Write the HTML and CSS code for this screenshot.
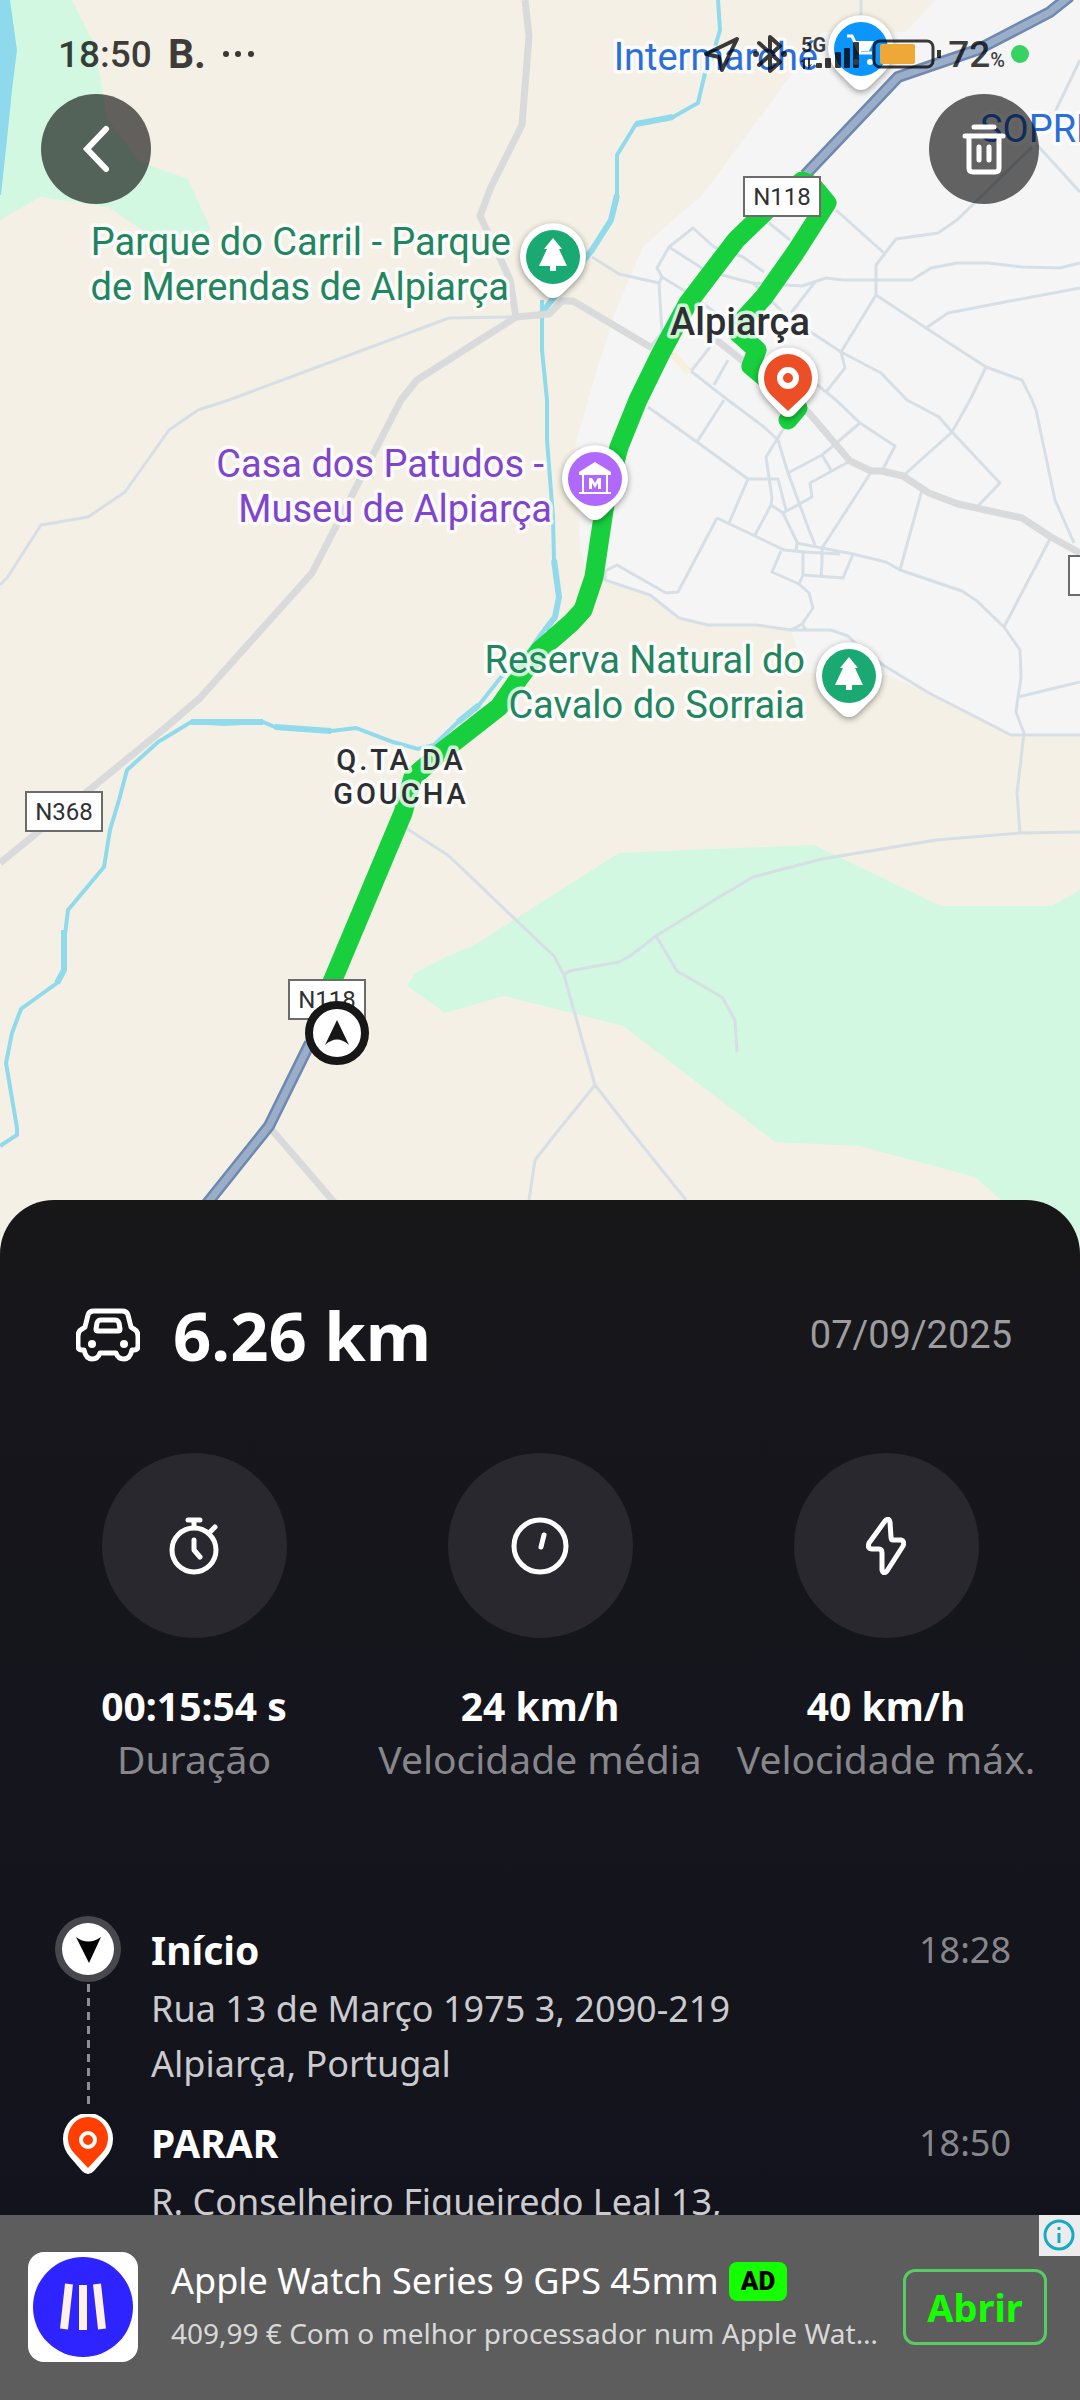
FILE: index.html
```html
<!DOCTYPE html>
<html lang="pt">
<head>
<meta charset="utf-8">
<meta name="viewport" content="width=device-width, initial-scale=1">
<title>Detalhes da viagem</title>
<link rel="stylesheet" href="styles.css">
</head>
<body>
<div class="app">
  <section class="map-area">
    <svg class="map" viewBox="0 0 1080 1260" role="img" aria-label="Mapa do percurso em Alpiarça">
      <defs>
        <path id="pin" d="M0 41c-4 0-7-2-10-5L-24 22A33 33 0 1 1 24 22L10 36C7 39 4 41 0 41Z"/>
        <path id="tree" d="M0-19 9-8H6L14 9H3v5h-6V9h-11L-6-8h-3Z"/>
      </defs>
      <rect class="land" width="1080" height="1260"/>
      <path class="park" d="M0 0H72L92 40 100 75 107 118 140 162 188 179 210 228 206 235H150L108 207 40 197 0 220Z"/>
      <path class="park" d="M407 986 415 973 448 956 473 946 540 903 619 853 814 845 941 906H1052L1080 890V1260H1070L1001 1200 975 1177 859 1146 775 1142 623 1026 540 1005 504 996 445 1013Z"/>
      <path class="urban" d="M936 0 905 32H822L791 75 764 112 700 198 681 213 643 247 616 310 600 360 588 400 574 450 581 553 585 567 604 582 650 595 679 618 708 625H757L791 631 797 648 807 673 888 675 929 693 1011 735H1080V0Z"/>
      <path class="lake" d="M0 0H10L17 50 12 90 8 130 1 195H0Z"/>
      <g class="river">
        <path d="M718 0 720 30 712 57 705 73 698 103 673 117 636 124 617 155V200L611 220 592 250M542 300V350L547 400V440L553 517 554 560 559 597 555 617 540 635 530 650 501 677 479 705 458 722 434 745 418 749 393 742 356 728 331 731 275 727 263 722 224 724 191 722 158 742 127 770 119 800 110 830 104 867 68 910 64 943V970L57 983 21 1009 12 1033 6 1063 17 1128V1135L0 1146"/>
        <path class="river-wide" d="M673 117 636 124M617 195 611 220 592 250 540 315M554 560 559 597 555 617 545 630M479 705 458 722M331 731 275 727M263 722 191 722M64 930V970L57 983"/>
      </g>
      <g class="street">
        <path d="M861 0V18M1080 60 1055 112M1028 135 1080 192M1032 147 957 220 938 233 896 239 876 265V295L841 352 845 368 826 392M836 210 884 253M769 223 790 240"/>
        <path d="M714 247 693 228 669 247 657 268 662 277 659 283 662 333 650 347M592 257 619 274 659 283M714 247 743 257 764 272"/>
        <path d="M669 247 705 270 733 278 753 283 802 286 826 278 843 280H912L931 268 957 263H988L1022 267 1060 268 1080 263"/>
        <path d="M1080 288 1005 302 948 313 926 328M876 295 926 328 986 367 1022 380 1032 400 1036 410 1055 500 1074 543M986 367 970 400 952 432 903 476"/>
        <path d="M841 352 881 373 907 400 939 417 952 432 1000 483 977 507M815 282 791 313M753 283 788 317 841 352M662 277 688 293 726 320"/>
        <path d="M710 347 692 370M728 360 714 385M671 353 692 372 728 400 764 427 778 440 788 473 809 530 815 545M826 392 836 400 860 423M826 392 815 383"/>
        <path d="M648 407 697 442 748 479H778L786 510M724 400 697 442M748 479 729 523M784 428 766 457 772 498 771 505 755 535"/>
        <path d="M717 518 753 535 784 550 805 552 840 554M717 518 678 592 666 593 617 565 605 571V580L650 595 679 618 708 625H757L791 630H831L848 636 855 643 883 665 929 693 1011 735H1080"/>
        <path d="M771 505 783 513 797 542 796 552M783 513 812 497 810 483 850 461M788 473 822 455 834 445 860 423 895 446 882 471M822 455 831 470"/>
        <path d="M870 474 822 548V563L821 577M797 543 822 548 853 554 886 562 900 570 962 591 977 601 1004 627 1020 650 1021 678 1018 697 1016 712 1024 733 1017 793 1020 833"/>
        <path d="M922 490 900 570M1051 537 1004 627M1018 697 1080 682M781 551 772 572 799 584 809 593 813 608 802 624 791 630M802 624 806 630M803 553V575L799 584M803 575 843 578 853 554"/>
        <path d="M516 317 449 318 229 400 198 410 169 430 125 492 88 517 41 525 7 578 0 585"/>
        <path d="M1080 832 1020 833 936 840 822 859 753 877 716 899 656 936 630 956 619 962 569 971 564 975M656 936 677 971 722 997 735 1020 737 1052"/>
        <path d="M406 828 449 856 540 943 554 956 564 975 583 1043 595 1085 630 1130 686 1200M595 1085 557 1132 535 1160 529 1200"/>
      </g>
      <g class="road">
        <path d="M525 0 529 36 522 125 491 187 480 216 501 260 510 280 516 317 417 380 401 400 312 573 200 698 165 728 0 863"/>
        <path d="M516 317 549 314 562 301H573L652 348M700 332 719 342 809 413 850 461 871 471H882L903 476 929 493 958 504 1022 518 1051 537 1080 553M272 1130 334 1202"/>
      </g>
      <path class="plaza" d="M673 354 689 373"/>
      <path class="highway-edge" d="M1070-4 1050 12 977 50 898 77 805 175M310 1043 269 1126 205 1206"/>
      <path class="highway" d="M1070-4 1050 12 977 50 898 77 805 175M310 1043 269 1126 205 1206"/>
      <path class="route" d="M332 982 403 813 413 777 444 750 499 707 520 677 540 650 571 623 583 610 594 577 604 510 611 477 619 447 638 400 661 353 688 303 736 240 767 210 802 181 812 185 827 203 795 253 764 297 743 320 738 333 757 350 751 366 788 397 798 408 788 420"/>
      <g class="shield">
        <rect x="744" y="177" width="76" height="39"/><text x="782" y="205">N118</text>
        <rect x="26" y="792" width="76" height="39"/><text x="64" y="820">N368</text>
        <rect x="289" y="980" width="76" height="39"/><text x="327" y="1008">N118</text>
        <rect x="1069" y="556" width="76" height="39"/>
      </g>
      <g class="label label-green">
        <text x="511" y="255">Parque do Carril - Parque</text>
        <text x="509" y="300">de Merendas de Alpiarça</text>
        <text x="805" y="673">Reserva Natural do</text>
        <text x="805" y="718">Cavalo do Sorraia</text>
      </g>
      <g class="label label-purple">
        <text x="544" y="477">Casa dos Patudos -</text>
        <text x="552" y="522">Museu de Alpiarça</text>
      </g>
      <g class="label label-blue">
        <text x="818" y="70">Intermarché</text>
        <text class="label-start" x="980" y="142">SOPRE</text>
      </g>
      <text class="label label-town" x="740" y="335">Alpiarça</text>
      <g class="label label-district">
        <text x="401" y="770">Q.TA DA</text>
        <text x="401" y="804">GOUCHA</text>
      </g>
      <g class="pins">
        <g transform="translate(553 257)"><use class="pin-body" href="#pin"/><circle class="fill-green" r="27"/><use class="fill-white" href="#tree"/></g>
        <g transform="translate(849 676)"><use class="pin-body" href="#pin"/><circle class="fill-green" r="27"/><use class="fill-white" href="#tree"/></g>
        <g transform="translate(595 479)"><use class="pin-body" href="#pin"/><circle class="fill-purple" r="27"/>
          <path class="fill-white" d="M0-17 16-7V-4H13V13H16V15H-16V13H-13V-4H-16V-7ZM-11-4V13H11V-4Z" fill-rule="evenodd"/><path class="fill-white" d="M-6 10V-1h3L0 4 3-1H6V10H3V4L0 9-3 4V10Z"/></g>
        <g transform="translate(861 49)"><use class="pin-body" href="#pin"/><circle class="fill-blue" r="27"/>
          <path class="cart" d="M-14-13H-9L-1 4H11"/><path class="fill-white" d="M-8-8H13L8 2H-4Z"/><circle class="fill-white" cx="-5" cy="13" r="3"/><circle class="fill-white" cx="9" cy="13" r="3"/></g>
        <g transform="translate(788 378)"><path class="pin-body" d="M0 39c-3 0-5-1-7-3L-22 20A30 30 0 1 1 22 20L7 36C5 38 3 39 0 39Z"/><path class="fill-red" d="M0 33-17 17A24 24 0 1 1 17 17Z"/><circle class="pin-ring" r="8"/></g>
        <g transform="translate(337 1033)"><circle class="here" r="28"/><path class="fill-dark" d="M0-13 12 12Q0 1-12 12Z"/></g>
      </g>
    </svg>

    <header class="status">
      <div class="status-side">
        <time class="clock">18:50</time>
        <span class="brand">B.</span>
        <svg width="32" height="8" viewBox="0 0 32 8" aria-hidden="true"><g fill="currentColor"><circle cx="4" cy="4" r="3"/><circle cx="16" cy="4" r="3"/><circle cx="29" cy="4" r="3"/></g></svg>
      </div>
      <div class="status-side status-right">
        <svg width="38" height="40" viewBox="0 0 38 40" aria-label="Localização"><path d="M35 5 4 20 17 23 20 36Z" fill="none" stroke="currentColor" stroke-width="4" stroke-linejoin="round"/></svg>
        <svg width="36" height="40" viewBox="0 0 36 40" aria-label="Bluetooth"><path d="M7 9 28 28 18 37V3L28 12 7 31" fill="none" stroke="currentColor" stroke-width="4" stroke-linejoin="round" stroke-linecap="round"/><circle cx="4" cy="20" r="3" fill="currentColor"/><circle cx="32" cy="20" r="3" fill="currentColor"/></svg>
        <svg class="signal" width="60" height="34" viewBox="0 0 60 34" aria-label="Sinal 5G"><g fill="currentColor"><text x="1" y="15">5G</text><path d="M0 25 5 21V32H3V25ZM8 21H10V28L12 27 9 32H8Z"/><rect x="16" y="26" width="6" height="5" rx="1"/><rect x="25" y="21" width="6" height="10" rx="1"/><rect x="35" y="15" width="6" height="16" rx="1"/><rect x="44" y="11" width="6" height="20" rx="1"/><rect x="53" y="5" width="6" height="26" rx="1"/></g></svg>
        <svg width="70" height="30" viewBox="0 0 70 30" aria-label="Bateria"><rect x="2" y="2" width="59" height="26" rx="6" fill="none" stroke="currentColor" stroke-width="3"/><path d="M67 11V19" stroke="currentColor" stroke-width="4"/><rect x="8" y="5" width="35" height="20" rx="2" fill="#eda838"/></svg>
        <span class="charge">72<small>%</small></span>
        <span class="live-dot"></span>
      </div>
    </header>

    <nav class="map-controls">
      <button class="round-button" type="button" aria-label="Voltar"><svg width="32" height="50" viewBox="0 0 32 50"><path d="M26 5 7 25 26 45" fill="none" stroke="currentColor" stroke-width="6" stroke-linecap="round"/></svg></button>
      <button class="round-button" type="button" aria-label="Eliminar"><svg width="46" height="52" viewBox="0 0 46 52"><g fill="none" stroke="currentColor" stroke-width="5" stroke-linecap="round" stroke-linejoin="round"><path d="M13 4H33M4 13H42M8 13V45Q8 49 12 49H34Q38 49 38 45V13M18 24V37M28 24V37"/></g></svg></button>
    </nav>
  </section>

  <main class="sheet">
    <div class="summary">
      <svg class="car" width="64" height="54" viewBox="0 0 64 54" aria-hidden="true"><g fill="none" stroke="currentColor" stroke-width="5" stroke-linejoin="round"><path d="M18 3H46Q51 3 52 7L55 19Q56 20 58 21 62 23 62 28V38Q62 42 58 42H56Q54 51 48 51 42 51 40 45H24Q22 51 16 51 10 51 8 42H6Q2 42 2 38V28Q2 23 6 21 8 20 9 19L12 7Q13 3 18 3Z"/><path d="M25 12H39Q42 12 43 15L44 21Q44 23 42 23H22Q20 23 20 21L21 15Q22 12 25 12Z"/></g><g fill="currentColor"><circle cx="16" cy="36" r="4"/><circle cx="48" cy="36" r="4"/></g></svg>
      <h1 class="distance">6.26 km</h1>
      <time class="date" datetime="2025-09-07">07/09/2025</time>
    </div>

    <dl class="stats">
      <div class="stat">
        <span class="stat-icon"><svg width="52" height="58" viewBox="0 0 52 58"><g fill="none" stroke="currentColor" stroke-width="5" stroke-linecap="round" stroke-linejoin="round"><circle cx="26" cy="33" r="22"/><path d="M20 3H32M26 3V10M41 16 47 10M26 23V33L32 40"/></g></svg></span>
        <dd class="stat-value">00:15:54 s</dd>
        <dt class="stat-name">Duração</dt>
      </div>
      <div class="stat">
        <span class="stat-icon"><svg width="58" height="58" viewBox="0 0 58 58"><g fill="none" stroke="currentColor" stroke-width="5" stroke-linecap="round"><circle cx="29" cy="29" r="26"/><path d="M33 18 30 30"/></g></svg></span>
        <dd class="stat-value">24 km/h</dd>
        <dt class="stat-name">Velocidade média</dt>
      </div>
      <div class="stat">
        <span class="stat-icon"><svg width="40" height="58" viewBox="0 0 40 58"><path d="M19 4 3 26Q1 32 6 32H13Q16 32 16 36V53Q17 58 21 54L37 29Q39 24 35 23H27Q25 23 25 20L24 5Q23 0 19 4Z" fill="none" stroke="currentColor" stroke-width="5" stroke-linejoin="round"/></svg></span>
        <dd class="stat-value">40 km/h</dd>
        <dt class="stat-name">Velocidade máx.</dt>
      </div>
    </dl>

    <ol class="timeline">
      <li class="stop">
        <div class="stop-marker">
          <svg width="66" height="66" viewBox="0 0 66 66" aria-hidden="true"><circle cx="33" cy="33" r="33" fill="#47474d"/><circle cx="33" cy="33" r="26" fill="#fff"/><path d="M21 21Q33 30 46 21L34 47Z" fill="#000"/></svg>
          <span class="stop-line"></span>
        </div>
        <div class="stop-text">
          <h2 class="stop-title">Início</h2>
          <p class="stop-address">Rua 13 de Março 1975 3, 2090-219<br>Alpiarça, Portugal</p>
        </div>
        <time class="stop-time">18:28</time>
      </li>
      <li class="stop">
        <div class="stop-marker">
          <svg class="stop-pin" width="50" height="60" viewBox="0 0 50 60" aria-hidden="true"><path d="M25 60Q22 60 19 57L7 43A25 26 0 1 1 43 43L31 57Q28 60 25 60Z" fill="#fff"/><path d="M25 54 11 39A20 21 0 1 1 39 39Z" fill="#ff3f00"/><circle cx="25" cy="26" r="7" fill="none" stroke="#fff" stroke-width="4"/></svg>
        </div>
        <div class="stop-text">
          <h2 class="stop-title">PARAR</h2>
          <p class="stop-address">R. Conselheiro Figueiredo Leal 13,</p>
        </div>
        <time class="stop-time">18:50</time>
      </li>
    </ol>
  </main>

  <aside class="ad">
    <svg class="ad-logo" width="110" height="110" viewBox="0 0 110 110" aria-hidden="true"><rect width="110" height="110" rx="16" fill="#fff"/><circle cx="55" cy="55" r="50" fill="#2d24ff"/><g stroke="#fff1e8" stroke-width="8"><path d="M41 32 36 77M55 33V78M69 32 74 77"/></g></svg>
    <div class="ad-text">
      <p class="ad-title">Apple Watch Series 9 GPS 45mm <span class="ad-badge">AD</span></p>
      <p class="ad-description">409,99 € Com o melhor processador num Apple Watch</p>
    </div>
    <button class="ad-open" type="button">Abrir</button>
    <button class="ad-info" type="button" aria-label="Informações sobre o anúncio"><svg width="33" height="33" viewBox="0 0 33 33"><circle cx="16" cy="16" r="14" fill="none" stroke="#18a9c6" stroke-width="3"/><path d="M16 14V24M16 8V11" stroke="#18a9c6" stroke-width="3"/></svg></button>
  </aside>
</div>
</body>
</html>
```
FILE: styles.css
```css
* {
  box-sizing: border-box;
}

body,
h1,
h2,
p,
dl,
dd,
ol {
  margin: 0;
  padding: 0;
}

body {
  background: #15151d;
  color: #fff;
  font-family: "Noto Sans", sans-serif;
}

button {
  border: 0;
  padding: 0;
  font: inherit;
}

svg {
  display: block;
  flex: none;
}

.app {
  display: flex;
  flex-direction: column;
  height: 100vh;
}

/* Map */

.map-area {
  position: relative;
  flex: none;
}

.map {
  width: 100%;
  height: auto;
  font-family: Roboto, sans-serif;
}

.land { fill: #f4f0e5; }
.park { fill: #d3f8e2; }
.urban { fill: #f5f5f5; }
.lake { fill: #8fd9ec; }

.river {
  fill: none;
  stroke: #90daeb;
  stroke-width: 4;
}

.river-wide { stroke-width: 6; }

.street {
  fill: none;
  stroke: #d6dfe6;
  stroke-width: 3;
  stroke-linejoin: round;
}

.road {
  fill: none;
  stroke: #d9dadb;
  stroke-width: 7;
  stroke-linejoin: round;
}

.plaza {
  stroke: #f8efdc;
  stroke-width: 7;
}

.highway-edge {
  fill: none;
  stroke: #6f88ae;
  stroke-width: 12;
}

.highway {
  fill: none;
  stroke: #9aaeca;
  stroke-width: 7;
}

.route {
  fill: none;
  stroke: #18cf3e;
  stroke-width: 19;
  stroke-linejoin: round;
  stroke-linecap: round;
}

.shield rect {
  fill: #fff;
  stroke: #6b6b6b;
  stroke-width: 2;
}

.shield text {
  fill: #303134;
  font-size: 24px;
  text-anchor: middle;
}

.label {
  font-size: 38px;
  text-anchor: end;
  paint-order: stroke;
  stroke: rgba(255, 255, 255, 0.8);
  stroke-width: 7px;
  stroke-linejoin: round;
}

.label-green { fill: #21855f; }
.label-purple { fill: #7f45cc; }
.label-blue { fill: #2a6edb; }
.label-start { text-anchor: start; }

.label-town {
  fill: #2d2f33;
  font-weight: 500;
  text-anchor: middle;
}

.label-district {
  fill: #2d2f33;
  font-size: 29px;
  font-weight: 500;
  letter-spacing: 3px;
  text-anchor: middle;
}

.pin-body {
  fill: #fff;
  filter: drop-shadow(0 2px 3px rgba(0, 0, 0, 0.4));
}

.fill-white { fill: #fff; }
.fill-green { fill: #1aa873; }
.fill-purple { fill: #b168fd; }
.fill-blue { fill: #0b95fe; }
.fill-red { fill: #ec4e26; }
.fill-dark { fill: #171717; }

.pin-ring {
  fill: none;
  stroke: #fff;
  stroke-width: 6;
}

.cart {
  fill: none;
  stroke: #fff;
  stroke-width: 3;
}

.here {
  fill: #fff;
  stroke: #171717;
  stroke-width: 8;
}

/* Status bar and floating buttons lie over the map */

.status {
  position: absolute;
  inset: 0 0 auto;
  display: flex;
  align-items: center;
  justify-content: space-between;
  height: 108px;
  padding: 0 51px 0 58px;
  color: rgba(0, 0, 0, 0.77);
  font-family: Roboto, sans-serif;
  font-size: 37px;
  font-weight: 500;
}

.status-side {
  display: flex;
  align-items: center;
  gap: 16px;
}

.status-right {
  gap: 12px;
}

.brand {
  font-size: 41px;
  font-weight: 700;
}

.signal text {
  font-size: 20px;
  font-weight: 700;
}

.charge {
  margin-left: -6px;
}

.charge small {
  font-size: 20px;
}

.live-dot {
  width: 18px;
  height: 18px;
  margin-left: -6px;
  border-radius: 50%;
  background: #38d264;
}

.map-controls {
  position: absolute;
  inset: 94px 41px auto;
  display: flex;
  justify-content: space-between;
}

.round-button {
  display: grid;
  place-items: center;
  width: 110px;
  height: 110px;
  border-radius: 50%;
  background: rgba(0, 0, 0, 0.6);
  color: #fff;
}

/* Trip sheet */

.sheet {
  position: relative;
  flex: 1;
  min-height: 0;
  margin-top: -60px;
  padding-top: 90px;
  overflow: hidden;
  border-radius: 54px 54px 0 0;
  background: linear-gradient(#171718, #17161b 12%, #15151d 52%, #13131d);
}

.summary {
  display: flex;
  align-items: center;
  padding: 0 68px 0 76px;
}

.distance {
  margin-left: 33px;
  font-size: 67px;
  line-height: 90px;
}

.date {
  margin-left: auto;
  color: #9d9d9f;
  font-family: Roboto, sans-serif;
  font-size: 38px;
}

.stats {
  display: grid;
  grid-template-columns: repeat(3, 1fr);
  margin-top: 73px;
  padding: 0 21px;
}

.stat {
  display: flex;
  flex-direction: column;
  align-items: center;
  white-space: nowrap;
}

.stat-icon {
  display: grid;
  place-items: center;
  width: 185px;
  height: 185px;
  margin-bottom: 42px;
  border-radius: 50%;
  background: #29282e;
}

.stat-value {
  font-size: 39px;
  font-weight: 700;
  line-height: 52px;
}

.stat-name {
  color: #87878b;
  font-size: 39px;
  line-height: 54px;
}

.timeline {
  margin-top: 130px;
  padding: 0 69px 0 55px;
  list-style: none;
}

.stop {
  display: grid;
  grid-template-columns: 66px 1fr auto;
  column-gap: 30px;
}

.stop-marker {
  display: flex;
  flex-direction: column;
  align-items: center;
  gap: 2px;
}

.stop-line {
  flex: 1;
  width: 3px;
  background: repeating-linear-gradient(#8e8e92 0 8px, transparent 8px 14px);
}

.stop-pin {
  margin-top: 5px;
}

.stop-text {
  padding: 8px 0 18px;
}

.stop-title {
  font-size: 39px;
  line-height: 52px;
}

.stop-address {
  margin-top: 5px;
  color: #cbcbce;
  font-size: 36px;
  line-height: 55px;
}

.stop-time {
  padding-top: 8px;
  color: #87878b;
  font-size: 36px;
  line-height: 52px;
}

/* Advertisement */

.ad {
  position: relative;
  display: flex;
  flex: none;
  align-items: center;
  padding: 37px 33px 38px 28px;
  background: #5d5d5d;
}

.ad-text {
  flex: 1;
  min-width: 0;
  margin: 0 20px 0 33px;
}

.ad-title {
  display: flex;
  align-items: center;
  gap: 10px;
  font-size: 36px;
  line-height: 52px;
  white-space: nowrap;
}

.ad-badge {
  padding: 0 12px;
  border-radius: 8px;
  background: #14ff00;
  color: #000;
  font-family: Roboto, sans-serif;
  font-size: 26px;
  font-weight: 900;
  line-height: 39px;
}

.ad-description {
  overflow: hidden;
  color: #d8d8d8;
  font-size: 28px;
  line-height: 52px;
  text-overflow: ellipsis;
  white-space: nowrap;
}

.ad-open {
  width: 144px;
  height: 76px;
  border: 3px solid #57cc64;
  border-radius: 12px;
  background: transparent;
  color: #14ff00;
  font-size: 38px;
  font-weight: 700;
}

.ad-info {
  position: absolute;
  top: 0;
  right: 0;
  display: grid;
  place-items: center;
  width: 41px;
  height: 41px;
  background: #ececec;
}
```
